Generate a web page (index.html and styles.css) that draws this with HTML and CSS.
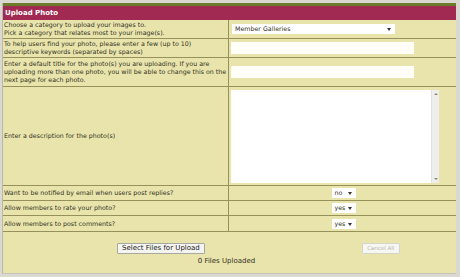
FILE: index.html
```html
<!DOCTYPE html>
<html lang="en">
<head>
    <meta charset="UTF-8">
    <title>Upload Photo</title>
    <link rel="stylesheet" href="styles.css">
</head>
<body>
    <div class="frame">
        <div class="topbar"></div>
        <div class="header">Upload Photo</div>

        <div class="form">
            <div class="row r1">
                <div class="label">Choose a category to upload your images to.<br>Pick a category that relates most to your image(s).</div>
                <div class="field">
                    <div class="select wide"><span>Member Galleries</span></div>
                </div>
            </div>
            <div class="row r2">
                <div class="label">To help users find your photo, please enter a few (up to 10) descriptive keywords (separated by spaces)</div>
                <div class="field"><input type="text" class="text"></div>
            </div>
            <div class="row r3">
                <div class="label">Enter a default title for the photo(s) you are uploading. If you are uploading more than one photo, you will be able to change this on the next page for each photo.</div>
                <div class="field"><input type="text" class="text"></div>
            </div>
            <div class="row r4">
                <div class="label">Enter a description for the photo(s)</div>
                <div class="field">
                    <div class="desc-box">
                        <textarea class="desc"></textarea>
                        <div class="scroll">
                            <span class="arrow up"></span>
                            <span class="arrow down"></span>
                        </div>
                    </div>
                </div>
            </div>
            <div class="row r5">
                <div class="label">Want to be notified by email when users post replies?</div>
                <div class="field center"><div class="select small"><span>no</span></div></div>
            </div>
            <div class="row r5">
                <div class="label">Allow members to rate your photo?</div>
                <div class="field center"><div class="select small"><span>yes</span></div></div>
            </div>
            <div class="row r7">
                <div class="label">Allow members to post comments?</div>
                <div class="field center"><div class="select small"><span>yes</span></div></div>
            </div>
        </div>

        <div class="footer">
            <div class="buttons">
                <button class="btn">Select Files for Upload</button>
                <button class="btn disabled" disabled>Cancel All</button>
            </div>
            <div class="status">0 Files Uploaded</div>
        </div>
    </div>
</body>
</html>
```

FILE: styles.css
```css
body {
    margin: 0;
    background-color: #d9d9d2;
    font-family: 'DejaVu Sans', Verdana, sans-serif;
    font-size: 6.3px;
    color: #33321e;
}
.frame {
    margin: 3px 4px 0 2px;
    height: 271px;
    border-left: 1px solid #b8b8ae;
    border-bottom: 1px solid #c4c4b8;
    background-color: #e8e4ac;
    box-sizing: border-box;
}
.topbar {
    height: 3px;
    background-color: #6c7a2a;
}
.header {
    height: 14px;
    line-height: 14px;
    padding-left: 2px;
    background-color: #a02a51;
    color: #fff;
    font-weight: bold;
    font-size: 7px;
}
.row {
    display: grid;
    grid-template-columns: 226px 1fr;
    border-bottom: 1px solid #96915a;
    box-sizing: border-box;
}
.r1, .r2 { height: 19px; }
.r3 { height: 29px; }
.r4 { height: 99px; }
.r5 { height: 15px; }
.r7 { height: 16px; }
.label {
    display: flex;
    align-items: center;
    padding: 0 0 0 1px;
    line-height: 8px;
    border-right: 1px solid #96915a;
}
.field {
    display: flex;
    align-items: center;
    padding-left: 2px;
}
.field.center {
    justify-content: center;
    padding-left: 0;
}
.select {
    position: relative;
    background-color: #fff;
    height: 10px;
    line-height: 10px;
    padding-left: 3px;
    box-sizing: border-box;
}
.select::after {
    content: '';
    position: absolute;
    right: 4px;
    top: 4px;
    border-left: 2px solid transparent;
    border-right: 2px solid transparent;
    border-top: 3px solid #333;
}
.select.wide {
    width: 163px;
    margin-left: 1px;
}
.select.small {
    width: 24px;
    margin-left: 2px;
}
.text {
    width: 183px;
    height: 12px;
    border: none;
    padding: 0;
    background-color: #fffff8;
}
.desc-box {
    display: flex;
    width: 208px;
    height: 93px;
    background-color: #fff;
}
.desc {
    flex: 1;
    border: none;
    padding: 0;
    resize: none;
    background-color: #fff;
}
.scroll {
    width: 7px;
    display: flex;
    flex-direction: column;
    justify-content: space-between;
    align-items: center;
    padding: 3px 0;
    background-color: #eeeeea;
    border-left: 1px solid #e2e2dc;
}
.arrow {
    border-left: 2px solid transparent;
    border-right: 2px solid transparent;
}
.arrow.up {
    border-bottom: 2px solid #888;
}
.arrow.down {
    border-top: 2px solid #888;
}
.footer {
    padding-top: 10px;
}
.buttons {
    display: flex;
    align-items: center;
    height: 12px;
}
.btn {
    font-family: 'DejaVu Sans', Verdana, sans-serif;
    font-size: 7px;
    height: 11px;
    padding: 0 4px;
    margin-left: 114px;
    background-color: #f4f4f0;
    border: 1px solid #a8a8a0;
    border-radius: 1px;
    color: #222;
    line-height: 9px;
}
.btn.disabled {
    margin-left: 157px;
    width: 38px;
    padding: 0;
    font-size: 5.5px;
    color: #b8b8b0;
    border-color: #d4d4cc;
    background-color: #f6f6f2;
}
.status {
    text-align: center;
    margin-top: 3px;
    padding-right: 6px;
    font-size: 7px;
}
```
